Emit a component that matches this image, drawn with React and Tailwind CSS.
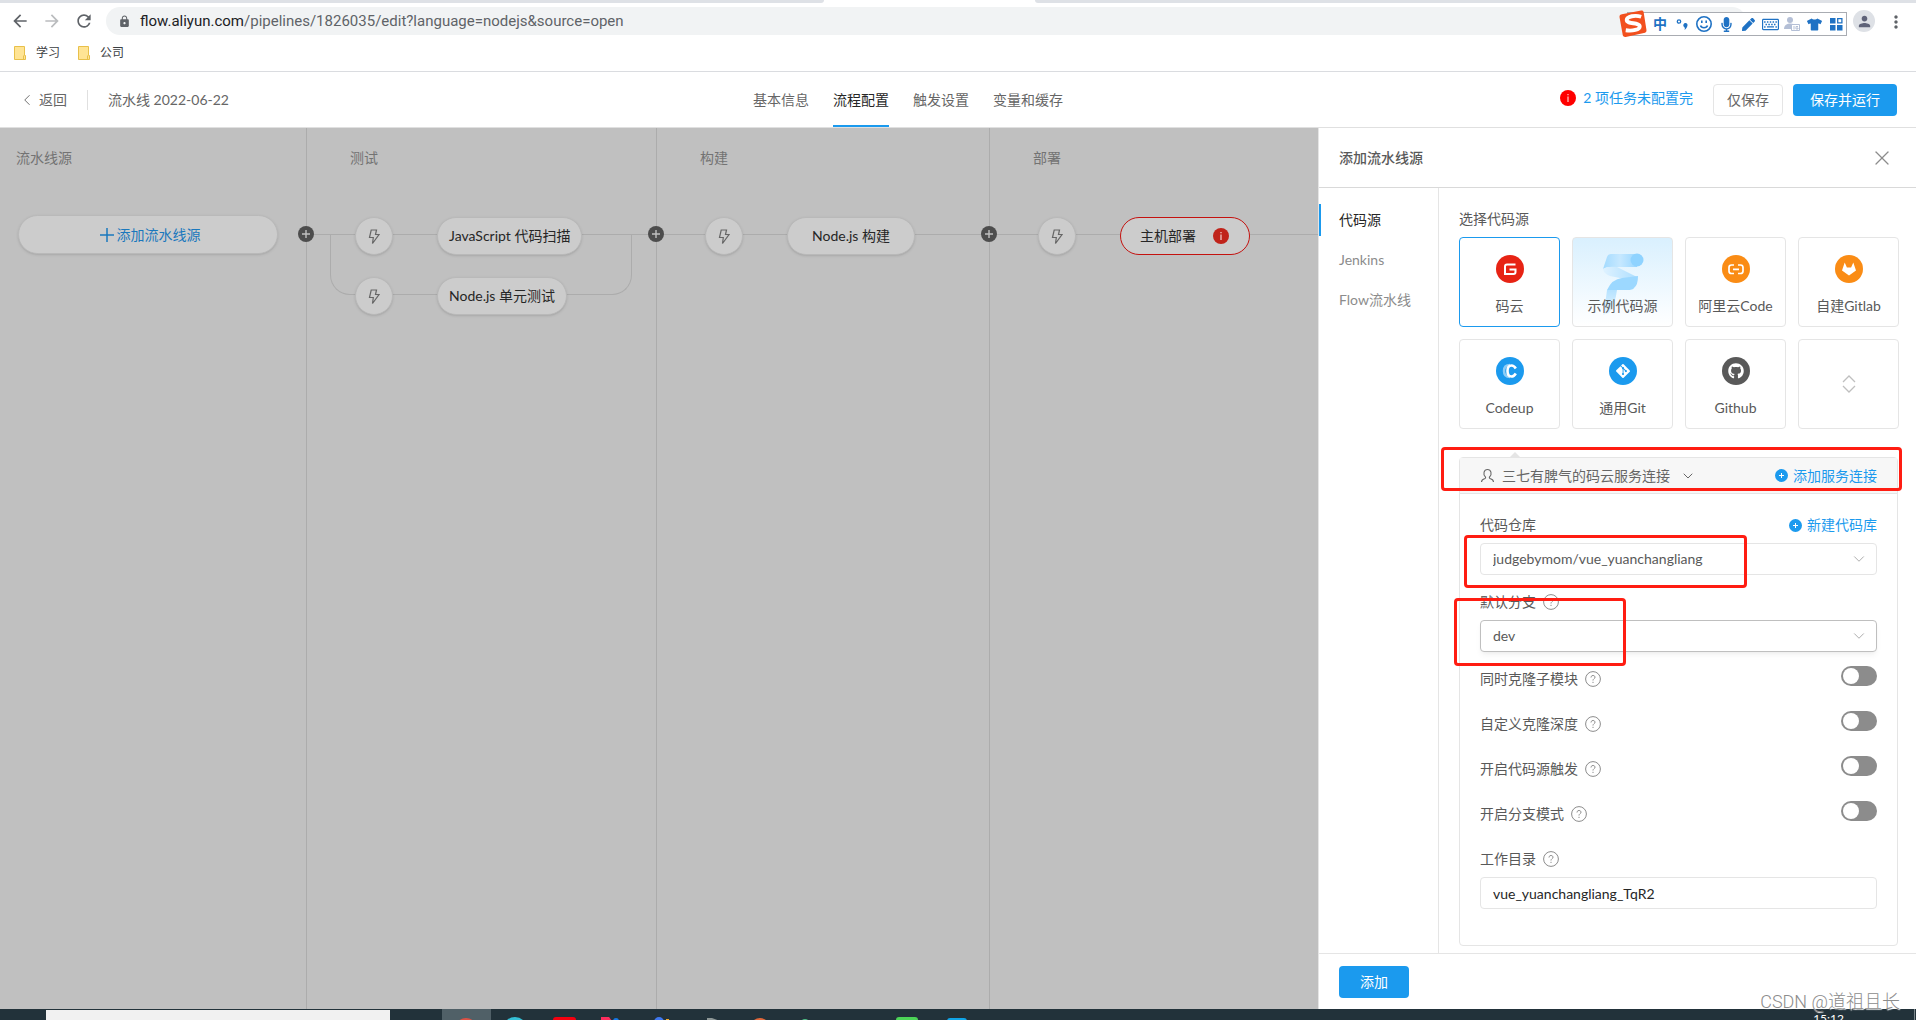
import React, { useState } from "react";
import { ChevronDown, ChevronLeft, X } from "lucide-react";
import { MdArrowBack, MdArrowForward, MdRefresh, MdLock, MdMoreVert, MdPerson } from "react-icons/md";
import { FaGithub, FaGitAlt, FaMicrophone, FaTshirt, FaPen, FaRegKeyboard } from "react-icons/fa";

const tabs = ["基本信息", "流程配置", "触发设置", "变量和缓存"];
const navItems = ["代码源", "Jenkins", "Flow流水线"];
const switches = ["同时克隆子模块", "自定义克隆深度", "开启代码源触发", "开启分支模式"];

function BrowserBar(){
    return(
        <div className="relative h-[72px] shrink-0 border-b border-[#dadce0] bg-white">
            <div className="flex h-[3px] bg-white">
                <div className="basis-[43%] rounded-br bg-[#dee1e6]"></div>
                <div className="basis-[11%]"></div>
                <div className="flex-1 rounded-bl bg-[#dee1e6]"></div>
            </div>
            <div className="mt-1 flex h-7 items-center pr-[170px]">
                <button aria-label="Back" className="ml-[10px] text-[#5f6368]"><MdArrowBack size={20} /></button>
                <button aria-label="Forward" className="ml-3 text-[#babcbe]"><MdArrowForward size={20} /></button>
                <button aria-label="Reload" className="ml-3 text-[#5f6368]"><MdRefresh size={20} /></button>
                <div className="ml-3 flex h-7 flex-1 items-center rounded-full bg-[#f1f3f4] pl-3">
                    <MdLock size={13} className="text-[#5f6368]" />
                    <span className="ml-[9px] font-[Roboto,sans-serif] text-[15px] leading-5 text-[#5f6368]">
                        <span className="text-[#202124]">flow.aliyun.com</span>/pipelines/1826035/edit?language=nodejs&amp;source=open
                    </span>
                </div>
            </div>
            <div className="mt-2 flex h-5 items-center gap-[18px] pl-[14px] text-xs text-[#3c4043]">
                {["学习", "公司"].map((name) => (
                    <a key={name} href="#" className="flex items-center gap-[10px]">
                        <svg width="12" height="14" viewBox="0 0 12 14">
                            <path d="M.5.5h10v9h1v4H.5z" fill="#ffe494" stroke="#e8c04a" />
                            <path d="M9.500 13V9.500" stroke="#e8c04a" />
                        </svg>
                        {name}
                    </a>
                ))}
            </div>
            <div className="absolute top-0 right-0 flex items-start">
                <ImeBar />
                <button aria-label="Profile" className="mt-[10px] ml-[6px] flex h-[22px] w-[22px] items-center justify-center rounded-full bg-[#dee1e6] text-[#5f6379]">
                    <MdPerson size={17} />
                </button>
                <button aria-label="Menu" className="mt-3 mr-[10px] ml-[11px] text-[#5f6368]"><MdMoreVert size={20} /></button>
            </div>
        </div>
    )
}

function ImeBar(){
    return(
        <div className="relative mt-3 flex h-6 w-[220px] items-center border border-[#a9acb2] bg-white pl-[21px] text-[#1f72c4]">
            <svg className="absolute -top-1 -left-[10px]" width="29" height="29" viewBox="0 0 30 30">
                <path d="M4 5.500 24 1.500q2-.3 2.500 1.500l3 19q.2 2-1.500 2.500l-20 4.500q-2.500.3-3-1.500L1.500 8q-.2-2 2.500-2.500z" fill="#f2501e" />
                <path d="M24 8C18 6 9 7.500 9 11.500c0 4.500 13.500 2 13.500 6.500 0 3.500-7.500 5-14.500 4" fill="none" stroke="#fff" strokeWidth="4" />
            </svg>
            <div className="flex items-center">
                <span className="w-[22px] text-center text-sm leading-5 font-bold">中</span>
                <svg width="22" height="20" viewBox="0 0 22 20">
                    <circle cx="8" cy="7.500" r="1.700" fill="none" stroke="currentColor" strokeWidth="1.300" />
                    <path d="M14 9c3.500-.5 3.500 4-.5 7 .5-1.500.7-2.500-.6-3.300-1.200-1.200-.2-3.500 1.100-3.700z" fill="currentColor" />
                </svg>
                <svg width="22" height="20" viewBox="0 0 22 20" fill="none" stroke="currentColor" strokeWidth="1.600">
                    <circle cx="11" cy="10" r="7.200" />
                    <path d="M7.500 11.500c1 3 6 3 7 0M8.800 6.500v2.500M13.200 6.500v2.500" />
                </svg>
                <span className="flex w-[22px] justify-center"><FaMicrophone size={15} /></span>
                <span className="flex w-[22px] justify-center"><FaPen size={13} /></span>
                <span className="flex w-[22px] justify-center"><FaRegKeyboard size={17} /></span>
                <svg width="22" height="20" viewBox="0 0 22 20">
                    <circle cx="9" cy="6" r="3" fill="#b4bfd6" />
                    <path d="M3 15c0-7 11-7 12-2v2z" fill="#b4bfd6" />
                    <path d="M10.500 10.500h8v6h-8z" fill="#fff" stroke="#b4bfd6" />
                    <path d="M13 12v3.500M17 12.500h-2v2.500h2v-1h-1" fill="none" stroke="#b4bfd6" />
                </svg>
                <span className="flex w-[22px] justify-center"><FaTshirt size={15} /></span>
                <svg width="22" height="20" viewBox="0 0 22 20" fill="currentColor">
                    <path d="M5 4h5.500v5.500H5zM5 11h5.500v5.500H5zM12 11h5.500v5.500H12z" />
                    <path d="M12.700 4.700h4.200v4.200h-4.200z" fill="none" stroke="currentColor" strokeWidth="1.300" />
                </svg>
            </div>
        </div>
    )
}

function InfoDot({color}){
    return(
        <svg width="16" height="16" viewBox="0 0 16 16" className="shrink-0">
            <circle cx="8" cy="8" r="8" fill={color} />
            <path d="M8 6.500V12M8 4v1.300" stroke="#fff" strokeOpacity=".8" strokeWidth="1.200" />
        </svg>
    )
}

function FlowHeader(){
    const [active, setActive] = useState("流程配置");
    return(
        <header className="flex h-14 shrink-0 items-center border-b border-[#e0e0e0] bg-white">
            <div className="flex basis-[39.3%] items-center pl-[18px]">
                <a href="#" className="flex items-center gap-[3px]"><ChevronLeft size={18} strokeWidth={1.25} />返回</a>
                <div className="mx-5 h-5 w-px bg-[#e0e0e0]"></div>
                <h1>流水线 2022-06-22</h1>
            </div>
            <nav className="flex h-full gap-6">
                {tabs.map((tab) => (
                    <button
                        key={tab}
                        onClick={() => setActive(tab)}
                        className={tab === active ? "border-b-2 border-[#1b9aee] pt-[2px] text-[#262626]" : "border-b-2 border-transparent pt-[2px]"}
                    >
                        {tab}
                    </button>
                ))}
            </nav>
            <div className="ml-auto flex items-center pr-[19px]">
                <a href="#" className="mr-5 flex items-center gap-[7px] pb-1 text-[#1b9aee]"><InfoDot color="#f00" />2 项任务未配置完</a>
                <button className="mr-[10px] h-8 rounded border border-[#e5e5e5] px-[13px]">仅保存</button>
                <button className="h-8 rounded bg-[#1b9aee] px-[17px] text-white">保存并运行</button>
            </div>
        </header>
    )
}

function Trigger(){
    return(
        <button aria-label="触发" className="z-10 flex h-[38px] w-[38px] shrink-0 items-center justify-center rounded-full border border-[#b9b9b9] bg-[#ccc] shadow-sm">
            <svg width="12" height="18" viewBox="0 0 12 18" fill="none" stroke="#666" strokeWidth="1.200">
                <path d="M3.200 3h5.300L7.500 7.500H11L4.500 16.500l.8-6H1.500z" />
            </svg>
        </button>
    )
}

function Line({grow}){
    return <div className={grow ? "mb-[3px] h-px flex-1 bg-[#acacac]" : "mb-[3px] h-px w-11 shrink-0 bg-[#acacac]"}></div>
}

function Job({name, error}){
    return(
        <button className={error
            ? "z-10 flex h-[38px] w-[130px] shrink-0 items-center justify-between rounded-full border border-[#c4120f] bg-[#ccc] pr-5 pl-[19px] text-[#262626]"
            : "z-10 h-[38px] min-w-32 shrink-0 rounded-full border border-[#b9b9b9] bg-[#ccc] px-[11px] text-[#262626] shadow-sm"}>
            {name}
            {error && <InfoDot color="#c0231a" />}
        </button>
    )
}

function AddStage(){
    return(
        <button aria-label="添加阶段" className="absolute top-[98px] -right-2 z-20">
            <svg width="16" height="16" viewBox="0 0 16 16">
                <circle cx="8" cy="8" r="8" fill="#4d4d4d" />
                <path d="M8 4v8M4 8h8" stroke="#c0c0c0" strokeWidth="1.400" />
            </svg>
        </button>
    )
}

function Canvas(){
    return(
        <section className="flex min-w-0 flex-1 bg-[#c0c0c0] text-[#737373]">
            <div className="relative w-[307px] shrink-0 border-r border-[#acacac] pt-5">
                <h2 className="pl-4 leading-5">流水线源</h2>
                <button className="mt-[47px] ml-[18px] flex h-[39px] w-[260px] items-center justify-center gap-[3px] rounded-full border border-[#b9b9b9] bg-[#ccc] pl-1 text-[#1a78bd] shadow-sm">
                    <svg width="14" height="14" viewBox="0 0 14 14"><path d="M7 0v14M0 7h14" stroke="currentColor" strokeWidth="1.500" /></svg>
                    添加流水线源
                </button>
                <AddStage />
            </div>
            <div className="relative w-[350px] shrink-0 border-r border-[#acacac] pt-5">
                <h2 className="pl-[43px] leading-5">测试</h2>
                <div className="relative mt-[49px] flex flex-col gap-[22px]">
                    <div className="absolute top-[17px] right-6 left-[23px] h-[61px] rounded-b-[20px] border-x border-b border-[#acacac]"></div>
                    <div className="flex items-center pl-1">
                        <Line /><Trigger /><Line /><Job name="JavaScript 代码扫描" /><Line grow />
                    </div>
                    <div className="flex items-center gap-11 pl-12">
                        <Trigger /><Job name="Node.js 单元测试" />
                    </div>
                </div>
                <AddStage />
            </div>
            <div className="relative w-[333px] shrink-0 border-r border-[#acacac] pt-5">
                <h2 className="pl-[43px] leading-5">构建</h2>
                <div className="mt-[49px] flex items-center pl-1">
                    <Line /><Trigger /><Line /><Job name="Node.js 构建" /><Line grow />
                </div>
                <AddStage />
            </div>
            <div className="min-w-0 flex-1 pt-5">
                <h2 className="pl-[43px] leading-5">部署</h2>
                <div className="mt-[49px] flex items-center pl-1">
                    <Line /><Trigger /><Line /><Job name="主机部署" error /><Line grow />
                </div>
            </div>
        </section>
    )
}

function Logo({color, children}){
    return(
        <svg width="28" height="28" viewBox="0 0 28 28">
            <circle cx="14" cy="14" r="14" fill={color} />
            {children}
        </svg>
    )
}

function Ribbon(){
    return(
        <svg className="absolute top-0 left-0" width="99" height="88" viewBox="0 0 99 88">
            <defs>
                <linearGradient id="band"><stop offset="0" stopColor="#a3dbff" /><stop offset=".5" stopColor="#c6e8ff" /><stop offset="1" stopColor="#9ad7ff" /></linearGradient>
                <linearGradient id="fold"><stop offset="0" stopColor="#dff2ff" /><stop offset="1" stopColor="#aedfff" /></linearGradient>
                <linearGradient id="tail" x2="0" y2="1"><stop offset="0" stopColor="#b5e2ff" /><stop offset="1" stopColor="#eaf7ff" /></linearGradient>
            </defs>
            <path d="M34 19q1-3 4-3h26v13H38q-5 0-8 2z" fill="url(#band)" />
            <circle cx="64" cy="22" r="6.500" fill="#8fd3ff" />
            <path d="M30 31q4-3 14-2l20 10-12 2-15-3q-7-3-7-7z" fill="url(#fold)" />
            <path d="M65 38q0 9-4 12-1 2-7 2H34q5-11 15-12z" fill="#9cd8ff" />
            <path d="M34 52h10q-2 15-8 23l-6 2q3-16 4-25z" fill="url(#tail)" />
        </svg>
    )
}

const sources = [
    { name: "码云", logo: <Logo color="#e72314"><path d="M19.500 9.500H11Q9 9.500 9 11.500V19h8.500q2 0 2-2v-2.500h-6" fill="none" stroke="#fff" strokeWidth="2" /></Logo> },
    { name: "示例代码源", demo: true },
    { name: "阿里云Code", logo: <Logo color="#fa8c15"><path d="M12 10H9.500Q7 10 7 12.500v3.500q0 2.500 2.500 2.500H12M16 10h2.500q2.500 0 2.500 2.500v3.500q0 2.500-2.500 2.500H16M11 14.300h6" fill="none" stroke="#fff" strokeWidth="1.700" /></Logo> },
    { name: "自建Gitlab", logo: <Logo color="#fa8c15"><path d="M14 20.500 7 15.500 9.700 7.500l2.200 5h4.200l2.200-5 2.700 8z" fill="#fff" /></Logo> },
    { name: "Codeup", logo: <Logo color="#1b9aee"><path d="M14 8q-6 0-6 6t6 6" fill="none" stroke="#8dcdf7" strokeWidth="2.500" /><path d="M19.800 11.500Q18 8.500 15.500 8.500q-4 0-4 5.500t4 5.500q2.500 0 4.300-3" fill="none" stroke="#fff" strokeWidth="2.600" /></Logo> },
    { name: "通用Git", logo: <Logo color="#1b9aee"><g transform="translate(6 6)"><FaGitAlt size={16} color="#fff" /></g></Logo> },
    { name: "Github", logo: <Logo color="#595959"><g transform="translate(6 6)"><FaGithub size={16} color="#fff" /></g></Logo> },
];

function SourceCard({source, selected, onSelect}){
    return(
        <button
            onClick={onSelect}
            aria-pressed={selected}
            className={`relative flex h-[90px] flex-col items-center rounded border text-[#595959] ${selected ? "border-[#1b9aee]" : "border-[#e5e5e5]"} ${source.demo ? "bg-linear-to-b from-[#d9f0fe] to-white" : "bg-white"}`}
        >
            {source.demo && <Ribbon />}
            <span className="mt-[17px] h-7">{source.logo}</span>
            <span className="relative mt-[13px] leading-5">{source.name}</span>
        </button>
    )
}

function Help(){
    return(
        <svg width="16" height="16" viewBox="0 0 16 16" fill="none" stroke="#8c8c8c" className="shrink-0">
            <circle cx="8" cy="8" r="7.400" />
            <path d="M6 6.500c0-2.800 4-2.500 4-.3C10 7.700 8 7.700 8 9.500M8 10.800v1.200" />
        </svg>
    )
}

function PlusLink({text}){
    return(
        <a href="#" className="flex items-center gap-[5px] text-[#1b9aee]">
            <svg width="13" height="13" viewBox="0 0 13 13">
                <circle cx="6.500" cy="6.500" r="6.500" fill="currentColor" />
                <path d="M6.500 4v5M4 6.500h5" stroke="#fff" />
            </svg>
            {text}
        </a>
    )
}

function SelectBox({id, value, focused, children}){
    return(
        <div className="relative mt-2">
            <select
                id={id}
                defaultValue={value}
                className={`h-8 w-full appearance-none rounded border bg-white px-3 text-[#595959] outline-none ${focused ? "border-[#bfbfbf] shadow-md shadow-black/5" : "border-[#e5e5e5]"}`}
            >
                <option>{value}</option>
            </select>
            <ChevronDown size={18} strokeWidth={1.25} className="pointer-events-none absolute top-[7px] right-[9px] text-[#a6a6a6]" />
            {children}
        </div>
    )
}

function Drawer(){
    const [nav, setNav] = useState("代码源");
    const [source, setSource] = useState("码云");
    return(
        <aside className="flex w-[598px] shrink-0 flex-col border-l border-[#e5e5e5] bg-white">
            <div className="flex h-[60px] shrink-0 items-center justify-between border-b border-[#d9d9d9] pr-[22px] pl-5">
                <h2 className="font-medium text-[#595959]">添加流水线源</h2>
                <button aria-label="关闭"><X size={24} strokeWidth={1.25} className="text-[#8c8c8c]" /></button>
            </div>
            <div className="flex min-h-0 flex-1">
                <nav className="flex w-[120px] shrink-0 flex-col gap-2 border-r border-[#e5e5e5] pt-4">
                    {navItems.map((item) => (
                        <button
                            key={item}
                            onClick={() => setNav(item)}
                            className={item === nav ? "h-8 border-l-2 border-[#1b9aee] pl-[18px] text-left text-[#262626]" : "h-8 border-l-2 border-transparent pl-[18px] text-left text-[#8c8c8c]"}
                        >
                            {item}
                        </button>
                    ))}
                </nav>
                <div className="min-w-0 flex-1 overflow-hidden pt-[21px] pr-[17px] pl-5 text-[#595959]">
                    <h3 className="leading-5">选择代码源</h3>
                    <div className="mt-2 grid grid-cols-4 gap-3">
                        {sources.map((s) => (
                            <SourceCard key={s.name} source={s} selected={s.name === source} onSelect={() => setSource(s.name)} />
                        ))}
                        <button aria-label="展开" className="flex h-[90px] items-center justify-center rounded border border-[#e5e5e5]">
                            <svg width="14" height="18" viewBox="0 0 14 18" fill="none" stroke="#bfbfbf" strokeWidth="1.300">
                                <path d="M1 7l6-6 6 6M1 11l6 6 6-6" />
                            </svg>
                        </button>
                    </div>
                    <div className="relative mt-7 mr-px rounded border border-[#e5e5e5] pb-9">
                        <svg className="absolute -top-[6px] left-[50px]" width="10" height="5" viewBox="0 0 10 5"><path d="M0 5l5-5 5 5z" fill="#e5e5e5" /></svg>
                        <div className="flex h-9 items-center justify-between border-b border-[#e5e5e5] bg-[#f7f7f7] px-5">
                            <button className="flex items-center text-[#666]">
                                <svg width="15" height="15" viewBox="0 0 15 15" fill="none" stroke="currentColor" strokeWidth="1.100">
                                    <path d="M5.500 9C2.500 6 4 1.500 7.500 1.500S12.500 6 9.500 9q-.5 1 .5 1.500 3.500 1 3.500 3.500M5.500 9q.5 1-.5 1.500-3.500 1-3.500 3.500" />
                                </svg>
                                <span className="ml-[7px]">三七有脾气的码云服务连接</span>
                                <ChevronDown size={16} strokeWidth={1.5} className="ml-[10px]" />
                            </button>
                            <PlusLink text="添加服务连接" />
                        </div>
                        <div className="pointer-events-none absolute -top-[11px] -right-[5px] -left-[19px] h-11 rounded-sm border-3 border-[#ff1d12]"></div>
                        <div className="px-5 pt-[21px]">
                            <div className="flex h-5 items-center justify-between">
                                <label htmlFor="repo">代码仓库</label>
                                <PlusLink text="新建代码库" />
                            </div>
                            <SelectBox id="repo" value="judgebymom/vue_yuanchangliang">
                                <div className="pointer-events-none absolute -top-2 -left-4 h-[53px] w-[283px] rounded-sm border-3 border-[#ff1d12]"></div>
                            </SelectBox>
                            <div className="mt-[17px] flex h-5 items-center gap-[7px]">
                                <label htmlFor="branch">默认分支</label>
                                <Help />
                            </div>
                            <SelectBox id="branch" value="dev" focused>
                                <div className="pointer-events-none absolute -top-[22px] -left-[26px] h-[68px] w-[172px] rounded-sm border-3 border-[#ff1d12]"></div>
                            </SelectBox>
                            <div className="mt-[14px]">
                                {switches.map((name) => (
                                    <div key={name} className="flex h-[45px] items-start justify-between">
                                        <div className="flex h-[26px] items-center gap-[7px]">
                                            <label htmlFor={name}>{name}</label>
                                            <Help />
                                        </div>
                                        <input
                                            id={name}
                                            type="checkbox"
                                            role="switch"
                                            className="h-5 w-9 appearance-none rounded-full bg-[#8c8c8c] p-[2px] before:block before:h-4 before:w-4 before:rounded-full before:bg-white checked:bg-[#1b9aee] checked:before:ml-4"
                                        />
                                    </div>
                                ))}
                            </div>
                            <div className="mt-[3px] flex h-5 items-center gap-[7px]">
                                <label htmlFor="dir">工作目录</label>
                                <Help />
                            </div>
                            <input id="dir" defaultValue="vue_yuanchangliang_TqR2" className="mt-2 h-8 w-full rounded border border-[#e5e5e5] px-3 text-[#262626] outline-none" />
                        </div>
                    </div>
                </div>
            </div>
            <div className="flex h-14 shrink-0 items-center border-t border-[#e5e5e5] pl-5">
                <button className="h-8 rounded bg-[#1b9aee] px-[21px] text-white">添加</button>
            </div>
        </aside>
    )
}

// only the top edge of each app icon shows
const apps = [
    <circle cx="24" cy="20" r="11" fill="#dd5144" />,
    <circle cx="24" cy="20" r="12" fill="#35c0d6" />,
    <rect x="13" y="8" width="23" height="20" rx="3" fill="#f5000f" />,
    <><path d="M12 8h8l3 4H12z" fill="#fc2d5d" /><circle cx="27" cy="12" r="3" fill="#1479e8" /></>,
    <><circle cx="21" cy="13" r="5" fill="#3f78ef" /><path d="M28 10h3v2h-3z" fill="#f0a92c" /></>,
    <path d="M20 9h5l8 3H20z" fill="#8d9796" />,
    <circle cx="24" cy="19" r="10" fill="#e2683a" />,
    <circle cx="20" cy="14" r="4" fill="#50c187" />,
    null,
    <rect x="13" y="8" width="22" height="20" rx="3" fill="#4cd457" />,
    <rect x="15" y="9" width="20" height="20" rx="3" fill="#10a5e8" />,
];

function Taskbar(){
    return(
        <footer className="flex h-[11px] shrink-0 overflow-hidden bg-[#22323a]">
            <div className="w-[46px] shrink-0"></div>
            <div className="mt-px w-[344px] shrink-0 bg-[#f1f1f1]"></div>
            <div className="ml-[52px] flex">
                {apps.map((app, i) => (
                    <svg key={i} width="49" height="11" viewBox="0 0 49 11" className={i === 0 ? "bg-[#506067]" : ""}>{app}</svg>
                ))}
            </div>
            <span className="mr-[70px] ml-auto pt-[2px] text-xs leading-4 text-white">15:12</span>
            <div className="mr-px w-px bg-[#7b868b]"></div>
        </footer>
    )
}

export default function App(){
    return(
        <div className="relative flex h-screen flex-col overflow-hidden font-[Lato,'Noto_Sans_CJK_SC',sans-serif] text-sm text-[#666]">
            <BrowserBar />
            <FlowHeader />
            <main className="flex min-h-0 flex-1">
                <Canvas />
                <Drawer />
            </main>
            <Taskbar />
            <span className="absolute right-4 bottom-[6px] font-[Roboto,'Noto_Sans_CJK_SC',sans-serif] text-lg leading-6 font-light text-[#8c8c8c] text-shadow-[1px_1px_1px_#fff]">CSDN @道祖且长</span>
        </div>
    )
}
